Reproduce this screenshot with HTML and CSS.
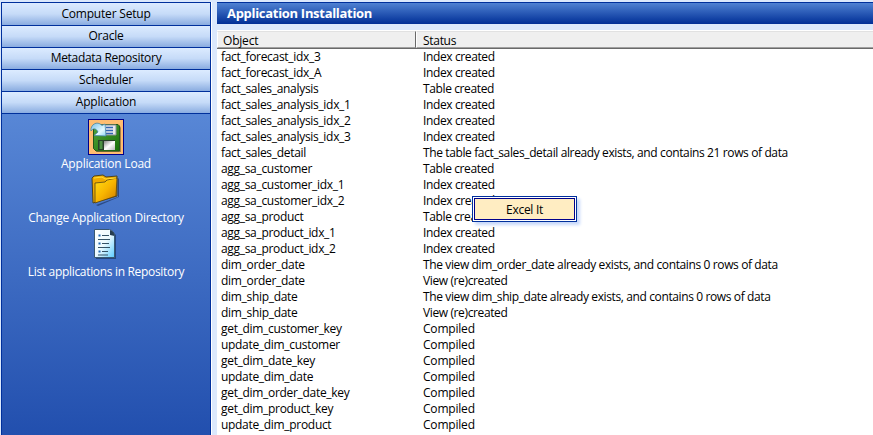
FILE: index.html
```html
<!DOCTYPE html>
<html lang="en">
<head>
<meta charset="utf-8">
<title>Application Installation</title>
<link rel="stylesheet" href="styles.css">
</head>
<body>
<div class="app">
  <nav class="sidebar">
    <button class="tab tab-first">Computer Setup</button>
    <button class="tab">Oracle</button>
    <button class="tab tab-tight">Metadata Repository</button>
    <button class="tab">Scheduler</button>
    <button class="tab">Application</button>
    <div class="tools">
      <a class="tool">
        <span class="tool-icon selected">
          <svg width="34" height="34" viewBox="0 0 34 34">
            <defs>
              <linearGradient id="green" x1="0" y1="0" x2="1" y2="1"><stop offset="0" stop-color="#55a53b"/><stop offset="1" stop-color="#176f09"/></linearGradient>
              <linearGradient id="metal" x1="0" y1="0" x2="1" y2="1"><stop offset="0" stop-color="#888"/><stop offset=".5" stop-color="#fff"/><stop offset="1" stop-color="#bbb"/></linearGradient>
              <linearGradient id="arrow" x1="0" y1="0" x2="1" y2="1"><stop offset="0" stop-color="#75bfe6"/><stop offset=".65" stop-color="#e5faff"/><stop offset="1" stop-color="#8ed4f4"/></linearGradient>
            </defs>
            <path d="M7 6h24l1 2v24H8l-3-3V8z" fill="#6b5130" opacity=".6"/>
            <path d="M6 4.500h23l1.500 1.500v25H7l-2.500-2.500V6z" fill="url(#green)" stroke="#23551b"/>
            <path d="M11 5h16v10H11z" fill="#e8e8ed" stroke="#8a9194"/>
            <path d="M17 7.500h7M17 10.500h7M17 13.500h7" stroke="#3465b5" stroke-width="1.3"/>
            <path d="M9 20h17v10H9z" fill="#27412a"/>
            <path d="M15 21h11v9H15z" fill="url(#metal)"/>
            <path d="M10.500 21h3v8h-3z" fill="#4c9143"/>
            <path d="M2 11C1 5 8 0 13 5.500L16 4l1 12-12-.500 4-3.500C7 8 4 8 2 11z" fill="url(#arrow)" stroke="#4485a5" stroke-width=".8"/>
          </svg>
        </span>
        <span class="tool-label">Application Load</span>
      </a>
      <a class="tool">
        <span class="tool-icon">
          <svg width="36" height="36" viewBox="0 0 36 36">
            <defs><linearGradient id="gold" x1="0" y1="0" x2="1" y2="1"><stop offset="0" stop-color="#ffdf16"/><stop offset=".5" stop-color="#f8b500"/><stop offset="1" stop-color="#c97800"/></linearGradient></defs>
            <path d="M8 32l22-8V5l1 1v18L10 33z" fill="#243f73" opacity=".8"/>
            <path d="M4 5l2-2 9-1 3 2 11-1v20L5 30z" fill="#efaa00" stroke="#4c441e"/>
            <path d="M7 10l10-1 2-2 10-2-1 18L7 30z" fill="url(#gold)" stroke="#554315" stroke-width=".8"/>
            <path d="M6 5l8-1 3 2 11-1" fill="none" stroke="#ffdf35"/>
          </svg>
        </span>
        <span class="tool-label label-change">Change Application Directory</span>
      </a>
      <a class="tool">
        <span class="tool-icon">
          <svg width="36" height="36" viewBox="0 0 36 36">
            <defs><linearGradient id="paper" x1="0" y1="0" x2="1" y2="1"><stop offset="0" stop-color="#fff"/><stop offset=".5" stop-color="#edfaff"/><stop offset="1" stop-color="#58caff"/></linearGradient></defs>
            <path d="M8 32h20V8l-3-3v26H8z" fill="#24467e"/>
            <path d="M6.500 2.500h15c3 1 5 3 5 6v22h-20z" fill="url(#paper)" stroke="#3a5972"/>
            <path d="M22 3v5l4.500 1c0-3-1.500-5-4.500-6z" fill="#263d50"/>
            <path d="M14 8.500h7M10 12.500h12M14 16.500h7M10 20.500h12M14 24.500h6M10 28h10" stroke="#345266" stroke-width="1.1"/>
            <path d="M10.500 8.500h2M10.500 16.500h2M10.500 24.500h2" stroke="#1f67b5" stroke-width="2"/>
          </svg>
        </span>
        <span class="tool-label label-list">List applications in Repository</span>
      </a>
    </div>
  </nav>
  <main class="main">
    <h1 class="title">Application Installation</h1>
    <section class="list">
      <div class="head"><div class="head-cell">Object</div><div class="head-cell head-last">Status</div></div>
      <div class="rows">
        <div class="row"><span>fact_forecast_idx_3</span><span class="status">Index created</span></div>
        <div class="row"><span>fact_forecast_idx_A</span><span class="status">Index created</span></div>
        <div class="row"><span>fact_sales_analysis</span><span class="status">Table created</span></div>
        <div class="row"><span>fact_sales_analysis_idx_1</span><span class="status">Index created</span></div>
        <div class="row"><span>fact_sales_analysis_idx_2</span><span class="status">Index created</span></div>
        <div class="row"><span>fact_sales_analysis_idx_3</span><span class="status">Index created</span></div>
        <div class="row"><span>fact_sales_detail</span><span class="status">The table fact_sales_detail already exists, and contains 21 rows of data</span></div>
        <div class="row"><span>agg_sa_customer</span><span class="status">Table created</span></div>
        <div class="row"><span>agg_sa_customer_idx_1</span><span class="status">Index created</span></div>
        <div class="row"><span>agg_sa_customer_idx_2</span><span class="status">Index created</span></div>
        <div class="row"><span>agg_sa_product</span><span class="status">Table created</span></div>
        <div class="row"><span>agg_sa_product_idx_1</span><span class="status">Index created</span></div>
        <div class="row"><span>agg_sa_product_idx_2</span><span class="status">Index created</span></div>
        <div class="row"><span>dim_order_date</span><span class="status">The view dim_order_date already exists, and contains 0 rows of data</span></div>
        <div class="row"><span>dim_order_date</span><span class="status">View (re)created</span></div>
        <div class="row"><span>dim_ship_date</span><span class="status">The view dim_ship_date already exists, and contains 0 rows of data</span></div>
        <div class="row"><span>dim_ship_date</span><span class="status">View (re)created</span></div>
        <div class="row"><span>get_dim_customer_key</span><span class="compiled">Compiled</span></div>
        <div class="row"><span>update_dim_customer</span><span class="compiled">Compiled</span></div>
        <div class="row"><span>get_dim_date_key</span><span class="compiled">Compiled</span></div>
        <div class="row"><span>update_dim_date</span><span class="compiled">Compiled</span></div>
        <div class="row"><span>get_dim_order_date_key</span><span class="compiled">Compiled</span></div>
        <div class="row"><span>get_dim_product_key</span><span class="compiled">Compiled</span></div>
        <div class="row"><span>update_dim_product</span><span class="compiled">Compiled</span></div>
      </div>
    </section>
  </main>
  <div class="menu"><div class="menu-item">Excel It</div></div>
</div>
</body>
</html>
```
FILE: styles.css
```css
* { box-sizing: border-box; }
body {
  margin: 0;
  overflow: hidden;
  background: #dbe8fc;
  color: #000;
  font: 12px/16px "Open Sans", "Noto Sans", sans-serif;
  letter-spacing: -0.2px;
}
.app { position: relative; display: flex; gap: 6px; height: 435px; padding: 2px 0 0 1px; }
.sidebar {
  display: flex;
  flex-direction: column;
  width: 210px;
  border: 1px solid #00309c;
  border-bottom: 0;
  box-shadow: 1px 0 #fff;
  background: linear-gradient(#5887d6 110px, #224fae);
}
.tab {
  flex: none;
  height: 22px;
  padding: 0 0 1px;
  border: 0;
  border-bottom: 1px solid #00309c;
  background: linear-gradient(#dcebff, #c6dbf8 50%, #8aace0);
  color: #000;
  font: inherit;
  letter-spacing: inherit;
}
.tab-first { height: 23px; }
.tab-tight { letter-spacing: -0.3px; }
.tools { display: flex; flex-direction: column; padding-top: 5px; color: #fff; }
.tool { display: flex; flex-direction: column; align-items: center; height: 54px; }
.tool-icon { width: 36px; height: 36px; }
.tool-icon svg { display: block; }
.selected { border: 1px solid #00008b; background: #ffbd70; }
.tool-label { margin-top: 1px; white-space: nowrap; }
.label-change { letter-spacing: -0.25px; }
.label-list { letter-spacing: -0.32px; }
.main { display: flex; flex: 1; flex-direction: column; gap: 6px; min-width: 0; }
.title {
  flex: none;
  height: 22px;
  margin: 0;
  padding-left: 10px;
  border-top: 1px solid #00309c;
  background: linear-gradient(#4f81d2, #002e96);
  color: #fff;
  font-size: 13px;
  font-weight: 700;
  line-height: 21px;
  letter-spacing: -0.3px;
}
.list { flex: 1; background: #fff; }
.head { display: flex; height: 19px; border-top: 1px solid #fff; border-bottom: 1px solid #696969; background: #efefef; }
.head-cell { width: 199px; padding-left: 5px; border-top: 1px solid #e1e1e1; border-left: 1px solid #fff; border-right: 1px solid #696969; border-bottom: 1px solid #a0a0a0; line-height: 17px; }
.head-last { flex: 1; padding-left: 6px; border-right: 0; letter-spacing: -0.3px; }
.row { display: grid; grid-template-columns: 202px 1fr; height: 16px; padding-left: 4px; white-space: nowrap; letter-spacing: -0.31px; }
.status { letter-spacing: -0.38px; }
.compiled { letter-spacing: -0.2px; }
.menu { position: absolute; left: 472px; top: 196px; width: 105px; height: 26px; padding: 1px; border: 1px solid #00309c; background: #fff; box-shadow: 3px 3px 3px #c7d8fa; }
.menu-item { height: 22px; border: 1px solid #00008b; background: #ffedc2; text-align: center; line-height: 21px; letter-spacing: -0.3px; }
```
